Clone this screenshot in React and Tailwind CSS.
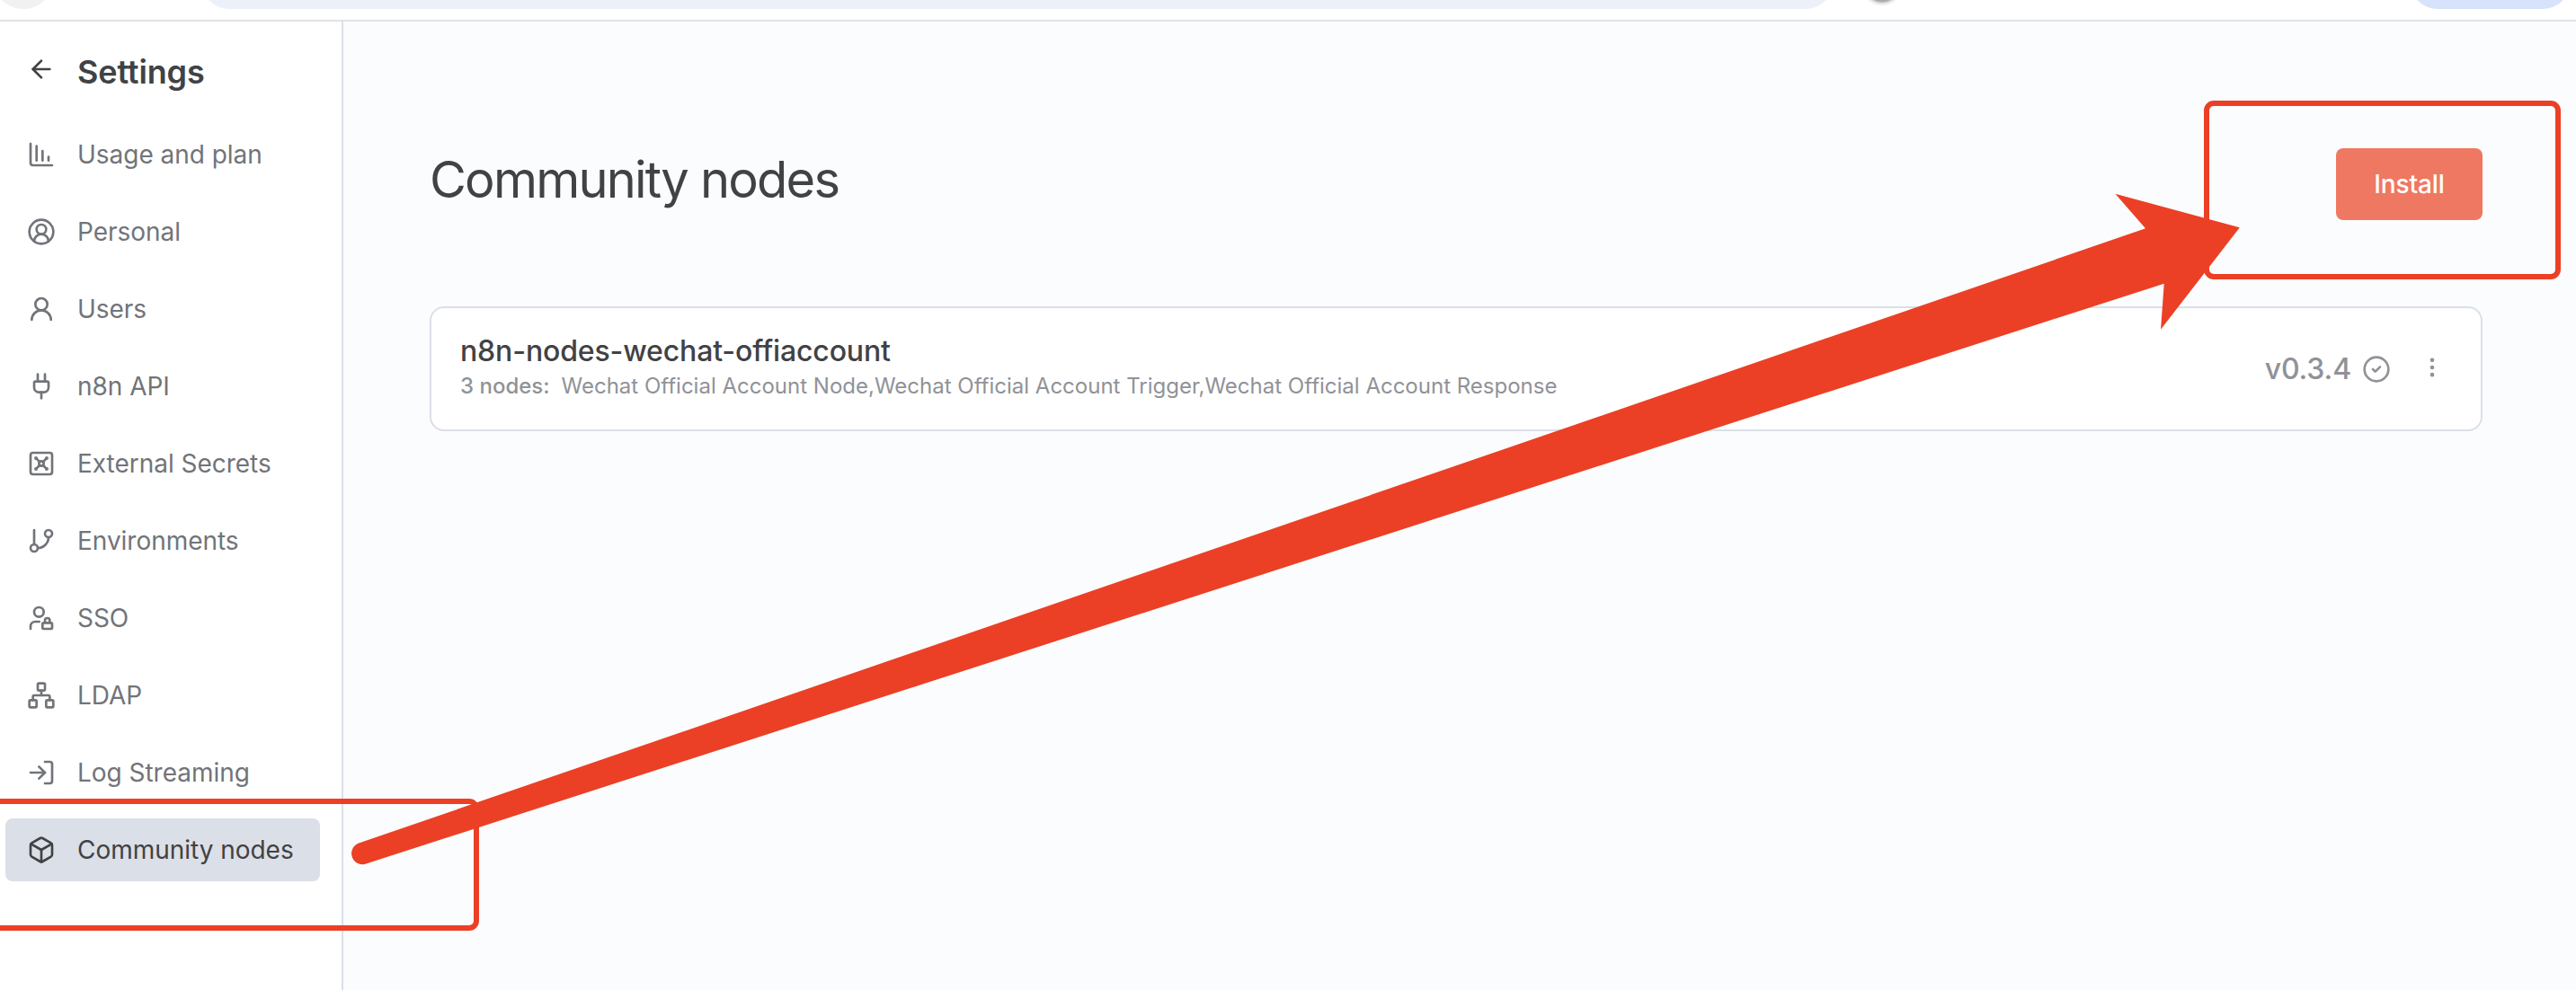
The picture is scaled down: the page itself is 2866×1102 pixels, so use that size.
import {
  ArrowLeft,
  ChartColumnDecreasing,
  CircleUserRound,
  UserRound,
  Plug,
  Vault,
  GitBranch,
  UserLock,
  Network,
  LogIn,
  Box,
  CircleCheck,
  EllipsisVertical,
} from "lucide-react";

const NAV = [
  { label: "Usage and plan", Icon: ChartColumnDecreasing },
  { label: "Personal", Icon: CircleUserRound },
  { label: "Users", Icon: UserRound },
  { label: "n8n API", Icon: Plug },
  { label: "External Secrets", Icon: Vault },
  { label: "Environments", Icon: GitBranch },
  { label: "SSO", Icon: UserLock },
  { label: "LDAP", Icon: Network },
  { label: "Log Streaming", Icon: LogIn },
  { label: "Community nodes", Icon: Box, active: true },
];

function BrowserBar() {
  return (
    <header className="relative h-6 shrink-0 overflow-hidden border-b-2 border-[#e1e2e1] bg-white">
      <div className="absolute bottom-3 left-[-8px] size-[68px] rounded-full bg-[#f1f1f1]" />
      <div className="absolute bottom-3 left-[222px] h-[68px] w-[1820px] rounded-full bg-[#ecf1f9]" />
      <div className="absolute bottom-[20px] left-[2074px] size-10 rounded-full bg-[#a9acab] shadow-[0_1px_4px_0px_rgba(0,0,0,0.35)]" />
      <div className="absolute bottom-3 left-[2679px] h-[68px] w-[183px] rounded-full bg-[#d7e2fb]" />
    </header>
  );
}

function NavItem({ label, Icon, active }) {
  return (
    <li
      className={
        active
          ? "flex h-[70px] items-center gap-6 rounded-lg bg-[#dbdfe7] pl-6 text-[#414244]"
          : "flex h-[70px] items-center gap-6 rounded-lg pl-6 text-[#717479]"
      }
    >
      <Icon size={32} strokeWidth={2} className="shrink-0" />
      <span className="whitespace-nowrap text-[28px] leading-none tracking-[-0.03px]">{label}</span>
    </li>
  );
}

function Sidebar() {
  return (
    <aside className="w-[382px] shrink-0 border-r-2 border-[#dbdfe7] bg-white pl-1.5 pr-6">
      <div className="flex h-[113px] items-center gap-6 pl-6 text-[#414244]">
        <ArrowLeft size={32} strokeWidth={2} className="mb-[7px] shrink-0" />
        <h2 className="mb-0.5 text-[36px] font-semibold leading-none tracking-[-0.15px]">Settings</h2>
      </div>
      <ul className="flex flex-col gap-4">
        {NAV.map((item) => (
          <NavItem key={item.label} {...item} />
        ))}
      </ul>
    </aside>
  );
}

function PackageCard() {
  return (
    <section className="mt-24 flex h-[139px] items-center justify-between rounded-2xl border-2 border-[#dbdfe9] bg-white pl-8 pr-10">
      <div className="flex flex-col pb-1">
        <h3 className="text-[32px] font-medium leading-[42px] tracking-[-0.14px] text-[#414244]">n8n-nodes-wechat-offiaccount</h3>
        <p className="flex gap-[13px] whitespace-nowrap text-[24px] leading-[36px] text-[#909298]">
          <span className="font-medium">3 nodes:</span>
          <span>Wechat Official Account Node,Wechat Official Account Trigger,Wechat Official Account Response</span>
        </p>
      </div>
      <div className="flex items-center text-[#909298]">
        <span className="mr-3 text-[32px] font-medium leading-none tracking-[-0.14px]">v0.3.4</span>
        <CircleCheck size={32} strokeWidth={2} />
        <EllipsisVertical size={28} strokeWidth={2} className="mb-1 ml-8" />
      </div>
    </section>
  );
}

function Annotations() {
  return (
    <div className="pointer-events-none absolute inset-0">
      <div className="absolute left-[2452px] top-[112px] h-[199px] w-[397px] rounded-[11px] border-6 border-[#eb4025]" />
      <div className="absolute -left-5 top-[889px] h-[147px] w-[553px] rounded-[11px] border-6 border-[#eb4025]" />
      <svg className="absolute inset-0" width="2866" height="1102" viewBox="0 0 2866 1102">
        <path
          d="M398.5 938.8 L2387 254.3 L2353.4 215.7 L2491.8 253.3 L2404 366.7 L2407.7 315.7 L408 961.2 A12 12 0 0 1 398.5 938.8 Z"
          fill="#eb4025"
        />
      </svg>
    </div>
  );
}

export default function App() {
  return (
    <div className="relative flex h-[1102px] w-[2866px] flex-col overflow-hidden bg-white font-['Inter',sans-serif]">
      <BrowserBar />
      <div className="flex flex-1">
        <Sidebar />
        <main className="flex-1 bg-[#fbfcfe] pl-24 pr-[104px] pt-[141px]">
          <div className="flex h-20 items-center justify-between">
            <h1 className="mb-[10px] text-[56px] leading-none tracking-[-1.8px] text-[#414244]">Community nodes</h1>
            <button className="h-20 w-[163px] rounded-lg bg-[#ef7862] text-[28px] font-medium tracking-[-0.1px] text-white">Install</button>
          </div>
          <PackageCard />
        </main>
      </div>
      <Annotations />
    </div>
  );
}
